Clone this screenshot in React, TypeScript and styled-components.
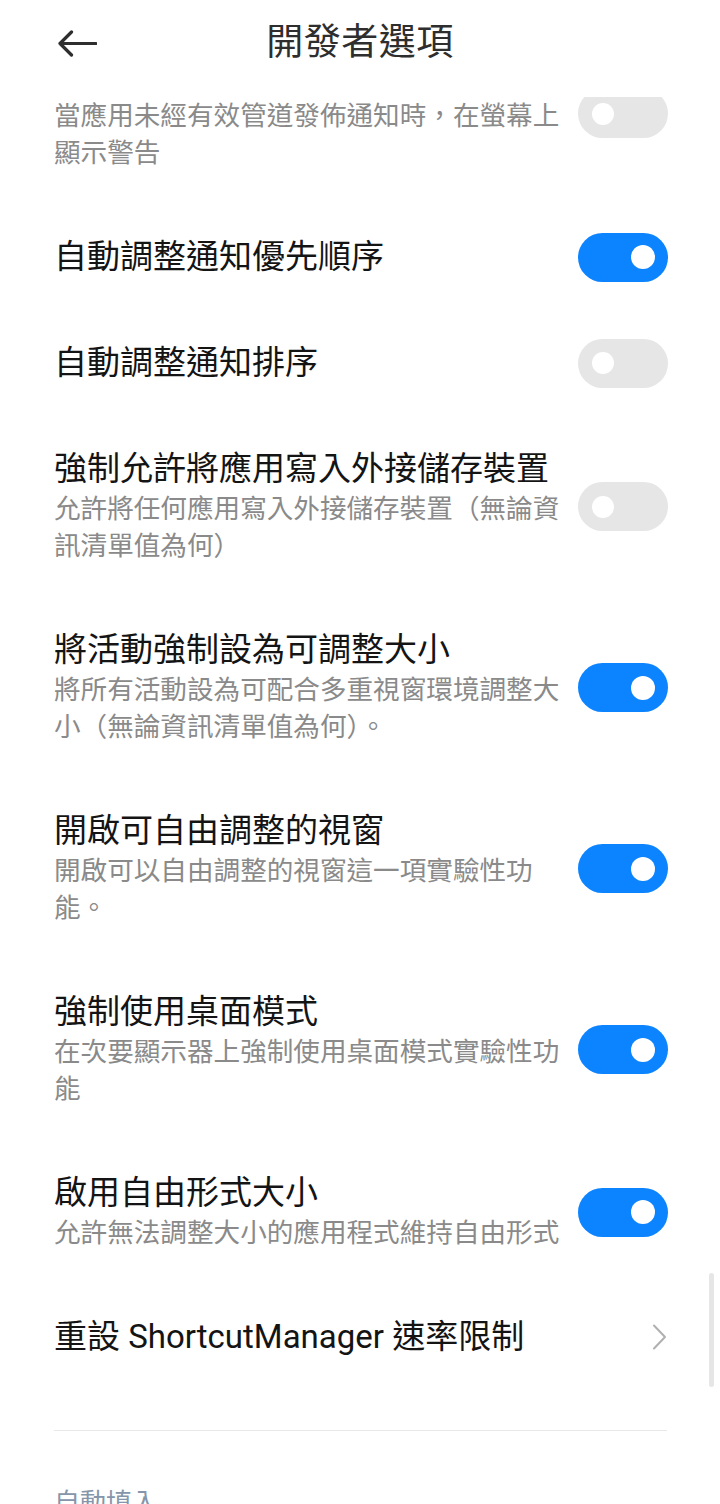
import * as React from 'react'
import styled, { createGlobalStyle } from 'styled-components'

const GlobalStyle = createGlobalStyle`
  html, body {
    margin: 0;
    padding: 0;
    background: #ffffff;
  }
  body {
    font-family: 'Roboto', 'Noto Sans CJK TC', 'Noto Sans', sans-serif;
    line-break: strict;
  }
`

const Screen = styled.div`
  width: 720px;
  height: 1504px;
  display: flex;
  flex-direction: column;
  overflow: hidden;
  background: #ffffff;
`

const Header = styled.header`
  height: 97px;
  box-sizing: border-box;
  padding-bottom: 11px;
  display: grid;
  grid-template-columns: 1fr auto 1fr;
  align-items: center;
  background: #ffffff;
  flex-shrink: 0;
`

const BackButton = styled.div`
  padding-left: 57px;
  display: flex;
  align-items: center;
  height: 40px;
`

const Title = styled.h1`
  margin: 0;
  font-size: 37px;
  font-weight: 400;
  color: #2e2e2e;
  line-height: 44px;
  letter-spacing: 0.5px;
`

const Viewport = styled.div`
  flex: 1;
  position: relative;
  overflow: hidden;
`

const List = styled.div`
  margin-top: -74px;
  display: flex;
  flex-direction: column;
`

const Row = styled.div`
  display: flex;
  align-items: center;
  padding: 33px 52px 33px 54px;
  gap: 16px;
`

const Texts = styled.div`
  flex: 1;
  min-width: 0;
`

const ItemTitle = styled.div`
  font-size: 33px;
  line-height: 40px;
  color: #141414;
`

const ItemSub = styled.div`
  margin-top: 1px;
  font-size: 26.6px;
  line-height: 37px;
  color: #8a8a8a;
`

// the switch is taller than a single title line, so it must not grow the row
const Track = styled.div<{ $on: boolean }>`
  width: 90px;
  height: 49px;
  margin: -5px 0;
  border-radius: 25px;
  flex-shrink: 0;
  display: flex;
  align-items: center;
  box-sizing: border-box;
  justify-content: ${(p) => (p.$on ? 'flex-end' : 'flex-start')};
  padding: ${(p) => (p.$on ? '0 13px 0 0' : '0 0 0 14px')};
  background: ${(p) => (p.$on ? '#0d84ff' : '#e6e6e6')};
`

const Knob = styled.div<{ $on: boolean }>`
  width: ${(p) => (p.$on ? 24 : 22)}px;
  height: ${(p) => (p.$on ? 24 : 22)}px;
  border-radius: 50%;
  background: #ffffff;
`

const Chevron = styled.div`
  flex-shrink: 0;
  display: flex;
  align-items: center;
  margin-right: 1px;
`

const Divider = styled.div`
  margin: 40px 53px 0 54px;
  height: 1px;
  background: #e8e8e8;
`

const Category = styled.div`
  padding: 54px 54px 0;
  font-size: 26px;
  line-height: 37px;
  color: #8595aa;
`

const ScrollThumb = styled.div`
  position: absolute;
  right: 6px;
  top: 1176px;
  width: 5px;
  height: 114px;
  border-radius: 3px;
  background: #e6e6e6;
`

interface Setting {
  title: string
  sub?: string
  on: boolean
}

const settings: Setting[] = [
  {
    title: '顯示通知管道警告',
    sub: '當應用未經有效管道發佈通知時，在螢幕上顯示警告',
    on: false,
  },
  { title: '自動調整通知優先順序', on: true },
  { title: '自動調整通知排序', on: false },
  {
    title: '強制允許將應用寫入外接儲存裝置',
    sub: '允許將任何應用寫入外接儲存裝置（無論資訊清單值為何）',
    on: false,
  },
  {
    title: '將活動強制設為可調整大小',
    sub: '將所有活動設為可配合多重視窗環境調整大小（無論資訊清單值為何）。',
    on: true,
  },
  {
    title: '開啟可自由調整的視窗',
    sub: '開啟可以自由調整的視窗這一項實驗性功能。',
    on: true,
  },
  {
    title: '強制使用桌面模式',
    sub: '在次要顯示器上強制使用桌面模式實驗性功能',
    on: true,
  },
  {
    title: '啟用自由形式大小',
    sub: '允許無法調整大小的應用程式維持自由形式',
    on: true,
  },
]

const Toggle = ({ on }: { on: boolean }) => (
  <Track $on={on}>
    <Knob $on={on} />
  </Track>
)

const BackArrow = () => (
  <svg width="40" height="27" viewBox="0 0 40 27" fill="none">
    <path
      d="M3 13.5 H39 M14.5 2 L3 13.5 L14.5 25"
      stroke="#2e2e2e"
      strokeWidth="3.2"
      strokeLinecap="round"
      strokeLinejoin="round"
    />
  </svg>
)

export default function App() {
  return (
    <Screen>
      <GlobalStyle />
      <Header>
        <BackButton>
          <BackArrow />
        </BackButton>
        <Title>開發者選項</Title>
        <div />
      </Header>
      <Viewport>
        <List>
          {settings.map((s) => (
            <Row key={s.title}>
              <Texts>
                <ItemTitle>{s.title}</ItemTitle>
                {s.sub && <ItemSub>{s.sub}</ItemSub>}
              </Texts>
              <Toggle on={s.on} />
            </Row>
          ))}
          <Row>
            <Texts>
              <ItemTitle>重設 ShortcutManager 速率限制</ItemTitle>
            </Texts>
            <Chevron>
              <svg width="15" height="26" viewBox="0 0 15 26" fill="none">
                <path
                  d="M2 1.5 L13 13 L2 24.5"
                  stroke="#b0b0b0"
                  strokeWidth="2"
                  strokeLinecap="round"
                  strokeLinejoin="round"
                />
              </svg>
            </Chevron>
          </Row>
          <Divider />
          <Category>自動填入</Category>
        </List>
        <ScrollThumb />
      </Viewport>
    </Screen>
  )
}
